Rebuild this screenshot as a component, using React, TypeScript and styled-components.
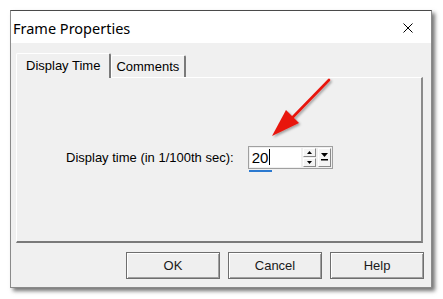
import React from "react"
import styled, { createGlobalStyle } from "styled-components"

const Global = createGlobalStyle`
html, body { margin: 0; padding: 0; background: #ffffff; }
body { font-family: "Liberation Sans", Arial, sans-serif; }
`

const Page = styled.div`
width: 443px;
height: 299px;
padding: 10px 0 0 10px;
box-sizing: border-box;
`

const Dialog = styled.div`
position: relative;
width: 422px;
height: 278px;
box-sizing: border-box;
border: 1px solid #8a8a8a;
border-top-color: #4a4a4a;
background: #f0f0f0;
box-shadow: 3px 3px 4px rgba(0, 0, 0, 0.55);
display: flex;
flex-direction: column;
`

const TitleBar = styled.div`
height: 32px;
background: #ffffff;
display: flex;
align-items: center;
justify-content: space-between;
padding: 0 18px 0 2px;
`

const Title = styled.span`
font-family: "Noto Sans", "Open Sans", sans-serif;
font-size: 14.5px;
color: #000;
padding-top: 2px;
`

const CloseIcon = styled.svg`
width: 10px;
height: 10px;
margin-top: 2px;
`

const Body = styled.div`
flex: 1;
padding: 10px 7px 0 5px;
display: flex;
flex-direction: column;
`

const TabStrip = styled.div`
display: flex;
align-items: flex-end;
height: 24px;
position: relative;
z-index: 1;
`

const Tab = styled.div<{ $active?: boolean }>`
box-sizing: border-box;
height: ${p => (p.$active ? "25px" : "22px")};
margin-bottom: ${p => (p.$active ? "-1px" : "0")};
padding: ${p => (p.$active ? "4px 9px 0 9px" : "3px 5px 0 4px")};
background: #f0f0f0;
border-top: 1px solid #ffffff;
border-left: 1px solid #ffffff;
border-right: 2px solid #7a7a7a;
border-radius: 2px 2px 0 0;
font-size: 13px;
color: #000;
`

const Panel = styled.div`
box-sizing: border-box;
width: 407px;
height: 166px;
border-top: 1px solid #ffffff;
border-left: 1px solid #ffffff;
border-right: 2px solid #8a8a8a;
border-bottom: 2px solid #7a7a7a;
display: flex;
align-items: center;
padding: 0 0 5px 49px;
`

const Label = styled.span`
font-size: 13px;
color: #000;
margin-right: 14px;
`

const FieldWrap = styled.div`
position: relative;
`

const Spin = styled.div`
box-sizing: border-box;
width: 85px;
height: 23px;
border: 1px solid #a0a0a0;
background: #f0f0f0;
display: flex;
align-items: stretch;
padding: 1px;
`

const TextArea = styled.div`
width: 52px;
background: #fff;
font-size: 15px;
line-height: 19px;
padding-left: 2px;
display: flex;
align-items: center;
color: #000;
`

const Caret = styled.span`
display: inline-block;
width: 1px;
height: 16px;
background: #000;
margin-left: 1px;
`

const SpinButtons = styled.div`
display: flex;
flex-direction: column;
margin-left: 2px;
gap: 1px;
`

const SpinButton = styled.div`
box-sizing: border-box;
width: 13px;
height: 9px;
background: #f4f4f4;
border: 1px solid #fff;
border-right-color: #8a8a8a;
border-bottom-color: #8a8a8a;
display: flex;
align-items: center;
justify-content: center;
`

const DropButton = styled.div`
box-sizing: border-box;
width: 13px;
margin-left: 2px;
background: #f4f4f4;
border: 1px solid #fff;
border-right-color: #8a8a8a;
border-bottom-color: #8a8a8a;
display: flex;
flex-direction: column;
align-items: center;
justify-content: center;
`

const Underline = styled.div`
position: absolute;
left: 1px;
top: 24px;
width: 23px;
height: 2px;
background: #2b79d0;
`

const ButtonRow = styled.div`
display: flex;
justify-content: flex-end;
gap: 8px;
padding-top: 9px;
`

const Button = styled.button`
box-sizing: border-box;
width: 94px;
height: 27px;
background: #efefef;
border: 1px solid #6e6e6e;
box-shadow: inset 1px 1px 0 #ffffff, inset -1px -1px 0 #a0a0a0;
font-family: "Liberation Sans", Arial, sans-serif;
font-size: 13px;
color: #1a1a1a;
padding: 0;
`

const Arrow = styled.svg`
position: absolute;
left: 255px;
top: 63px;
width: 80px;
height: 70px;
overflow: visible;
`

export default function App() {
  return (
    <>
      <Global />
      <Page>
        <Dialog>
          <TitleBar>
            <Title>Frame Properties</Title>
            <CloseIcon viewBox="0 0 10 10">
              <path d="M0.5 0.5 L9.5 9.5 M9.5 0.5 L0.5 9.5" stroke="#000" strokeWidth="1" />
            </CloseIcon>
          </TitleBar>
          <Body>
            <TabStrip>
              <Tab $active>Display Time</Tab>
              <Tab>Comments</Tab>
            </TabStrip>
            <Panel>
              <Label>Display time (in 1/100th sec):</Label>
              <FieldWrap>
                <Spin>
                  <TextArea>20<Caret /></TextArea>
                  <SpinButtons>
                    <SpinButton>
                      <svg width="5" height="3" viewBox="0 0 5 3"><path d="M2.5 0 L5 3 L0 3 Z" fill="#000" /></svg>
                    </SpinButton>
                    <SpinButton>
                      <svg width="5" height="3" viewBox="0 0 5 3"><path d="M0 0 L5 0 L2.5 3 Z" fill="#000" /></svg>
                    </SpinButton>
                  </SpinButtons>
                  <DropButton>
                    <svg width="7" height="8" viewBox="0 0 7 8">
                      <path d="M0 0 L7 0 L3.5 4 Z" fill="#000" />
                      <rect x="0" y="6" width="7" height="1.5" fill="#000" />
                    </svg>
                  </DropButton>
                </Spin>
                <Underline />
              </FieldWrap>
            </Panel>
            <ButtonRow>
              <Button>OK</Button>
              <Button>Cancel</Button>
              <Button>Help</Button>
            </ButtonRow>
          </Body>
          <Arrow viewBox="0 0 80 70">
            <defs>
              <filter id="sh" x="-20%" y="-20%" width="140%" height="140%">
                <feDropShadow dx="1.5" dy="1.5" stdDeviation="1.2" floodColor="#000" floodOpacity="0.35" />
              </filter>
            </defs>
            <g filter="url(#sh)">
              <path d="M63 6 L26 44" stroke="#e8150f" strokeWidth="2.6" strokeLinecap="round" />
              <path d="M6 62 L20 36 L33 49 Z" fill="#e8150f" />
            </g>
          </Arrow>
        </Dialog>
      </Page>
    </>
  )
}
